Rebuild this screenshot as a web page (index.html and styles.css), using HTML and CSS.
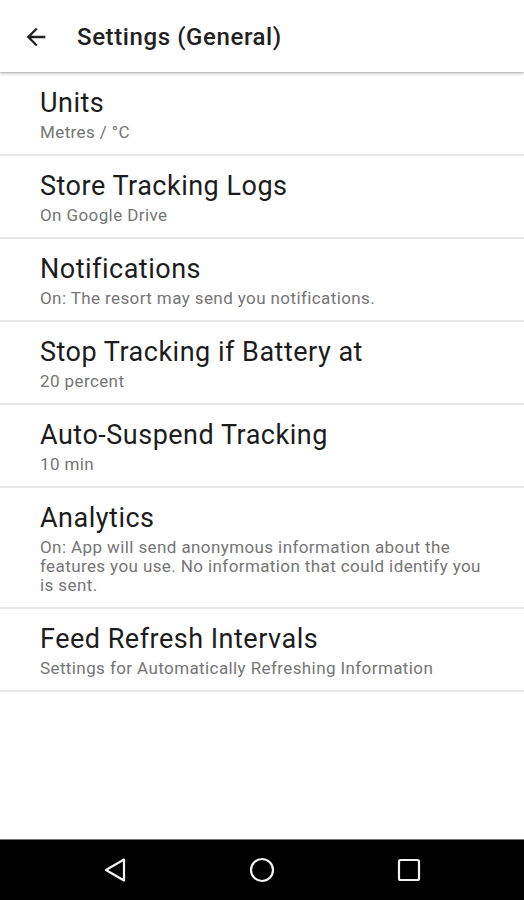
FILE: index.html
```html
<!DOCTYPE html>
<html>
<head>
<meta charset="utf-8">
<link rel="stylesheet" href="styles.css">
</head>
<body>
<div class="screen">
  <header class="appbar">
    <svg class="back" viewBox="0 0 24 24" width="28" height="28"><path d="M20 11H7.83l5.59-5.59L12 4l-8 8 8 8 1.41-1.41L7.83 13H20v-2z" fill="#212121"/></svg>
    <div class="apptitle">Settings (General)</div>
  </header>
  <main class="list">
    <div class="row"><div class="title">Units</div><div class="sub">Metres / °C</div></div>
    <div class="row"><div class="title">Store Tracking Logs</div><div class="sub">On Google Drive</div></div>
    <div class="row"><div class="title">Notifications</div><div class="sub">On: The resort may send you notifications.</div></div>
    <div class="row"><div class="title">Stop Tracking if Battery at</div><div class="sub">20 percent</div></div>
    <div class="row"><div class="title">Auto-Suspend Tracking</div><div class="sub">10 min</div></div>
    <div class="row"><div class="title">Analytics</div><div class="sub">On: App will send anonymous information about the features you use. No information that could identify you is sent.</div></div>
    <div class="row"><div class="title">Feed Refresh Intervals</div><div class="sub">Settings for Automatically Refreshing Information</div></div>
  </main>
  <nav class="navbar">
    <svg width="28" height="28" viewBox="0 0 28 28"><path d="M23 3.5 L5 14 L23 24.5 Z" fill="none" stroke="#f2f2f2" stroke-width="2.2" stroke-linejoin="round"/></svg>
    <svg width="28" height="28" viewBox="0 0 28 28"><circle cx="14" cy="14" r="11" fill="none" stroke="#f2f2f2" stroke-width="2.2"/></svg>
    <svg width="28" height="28" viewBox="0 0 28 28"><rect x="4" y="4" width="20" height="20" rx="1.5" fill="none" stroke="#f2f2f2" stroke-width="2.2"/></svg>
  </nav>
</div>
</body>
</html>
```
FILE: styles.css
```css
* { box-sizing: border-box; }
html, body { margin: 0; padding: 0; background: #fff; }
.screen {
  width: 524px;
  height: 900px;
  display: flex;
  flex-direction: column;
  font-family: Roboto, "Liberation Sans", sans-serif;
  overflow: hidden;
}
.appbar {
  height: 72px;
  flex: none;
  display: flex;
  align-items: center;
  padding-left: 22px;
  background: #fff;
  box-shadow: 0 1px 2px rgba(0,0,0,0.25), 0 2px 4px rgba(0,0,0,0.12);
  position: relative;
  z-index: 1;
}
.back { display: block; margin-top: 1px; }
.apptitle {
  margin-left: 27px;
  font-size: 24px;
  line-height: 28px;
  font-weight: 500;
  color: #212121;
  letter-spacing: 0.6px;
  margin-top: 2px;
}
.list {
  flex: 1;
  padding-top: 1px;
}
.row {
  padding: 15px 40px 12px 40px;
  border-bottom: 2px solid #e8e8e8;
}
.title {
  font-size: 27px;
  line-height: 30px;
  letter-spacing: 0.5px;
  color: #1c1c1c;
}
.sub {
  margin-top: 5px;
  font-size: 17px;
  line-height: 19px;
  letter-spacing: 0.4px;
  color: #757575;
}
.navbar {
  height: 61px;
  flex: none;
  background: #000;
  border-top: 1px solid #777;
  display: flex;
  align-items: center;
  justify-content: space-between;
  padding: 0 101px 0 101px;
}
.navbar svg { display: block; }
```
